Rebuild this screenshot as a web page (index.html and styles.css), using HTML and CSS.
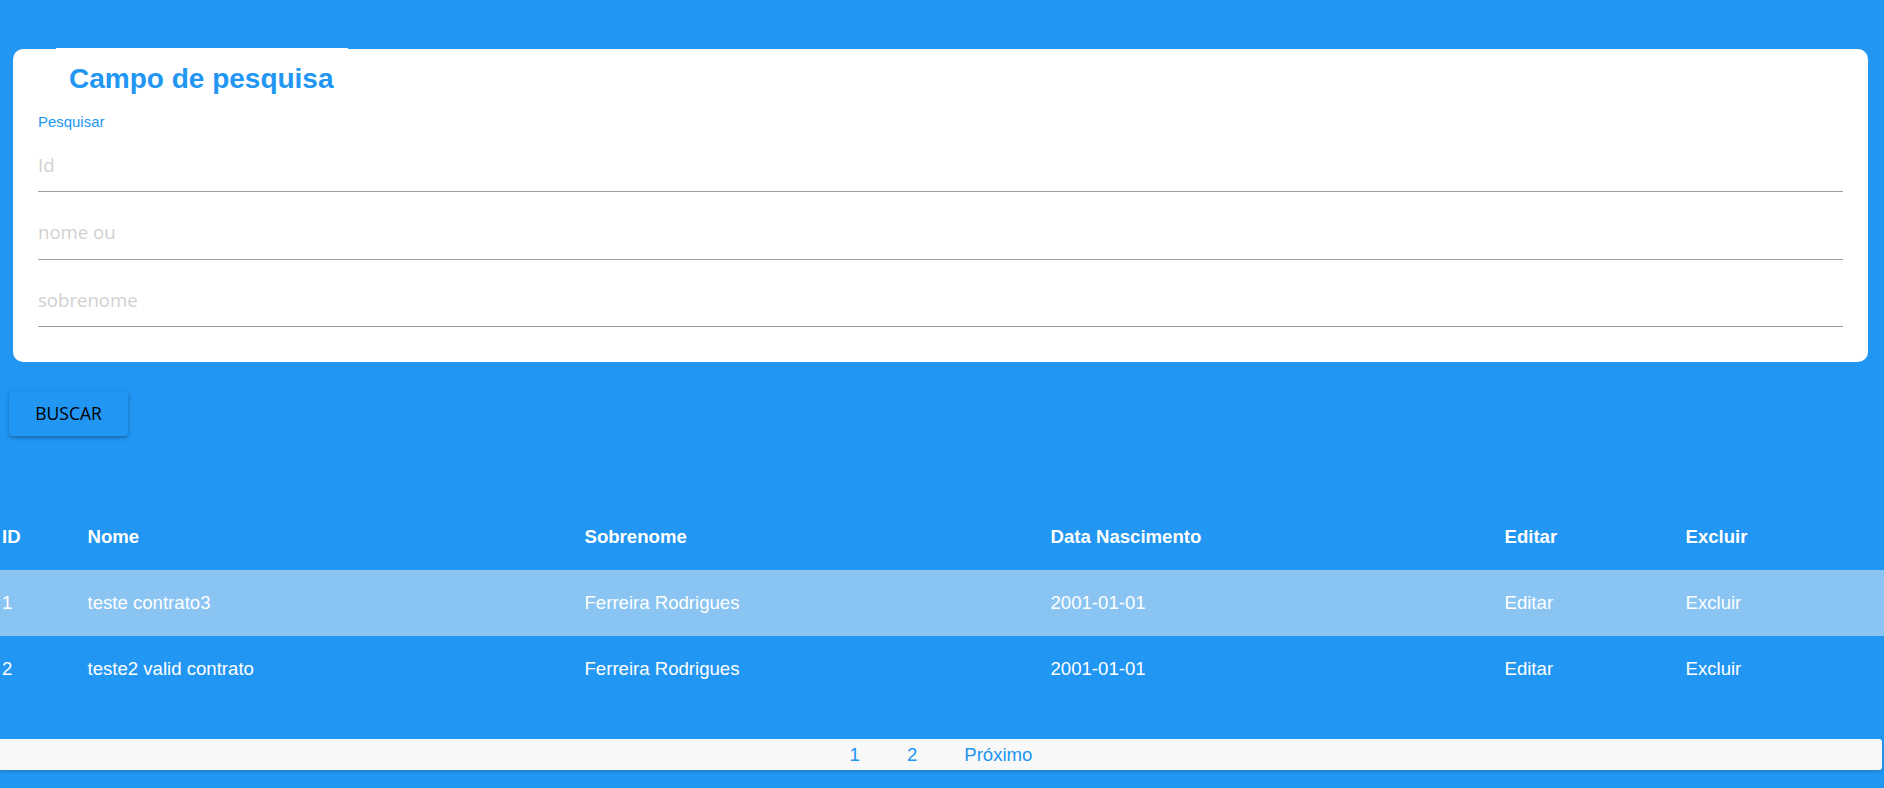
FILE: index.html
```html
<!DOCTYPE html>
<html lang="pt-BR">
<head>
<meta charset="utf-8">
<title>Campo de pesquisa</title>
<link rel="stylesheet" href="styles.css">
</head>
<body>
<main class="page">
  <section class="card">
    <div class="legend">Campo de pesquisa</div>
    <label class="label">Pesquisar</label>
    <div class="fields">
      <input class="field" type="text" placeholder="Id">
      <input class="field" type="text" placeholder="nome ou">
      <input class="field" type="text" placeholder="sobrenome">
    </div>
  </section>
  <button class="btn" type="button">BUSCAR</button>
  <table class="grid">
    <colgroup>
      <col class="c-id"><col class="c-nome"><col class="c-sob"><col class="c-data"><col class="c-edit"><col class="c-del">
    </colgroup>
    <thead>
      <tr><th>ID</th><th>Nome</th><th>Sobrenome</th><th>Data Nascimento</th><th>Editar</th><th>Excluir</th></tr>
    </thead>
    <tbody>
      <tr class="odd"><td>1</td><td>teste contrato3</td><td>Ferreira Rodrigues</td><td>2001-01-01</td><td>Editar</td><td>Excluir</td></tr>
      <tr><td>2</td><td>teste2 valid contrato</td><td>Ferreira Rodrigues</td><td>2001-01-01</td><td>Editar</td><td>Excluir</td></tr>
    </tbody>
  </table>
  <nav class="pager">
    <a class="pg">1</a>
    <a class="pg">2</a>
    <a class="pg">Próximo</a>
  </nav>
</main>
</body>
</html>
```

FILE: styles.css
```css
html, body {
  margin: 0;
  padding: 0;
  background: #2196F3;
  height: 100%;
  overflow: hidden;
}
body {
  font-family: "Liberation Sans", Arial, sans-serif;
  font-size: 18.6px;
}
.page {
  display: flex;
  flex-direction: column;
  padding-top: 49px;
}
.card {
  background: #fff;
  border-radius: 10px;
  margin: 0 16px 0 13px;
  padding: 0 25px 34.5px 25px;
  display: flex;
  flex-direction: column;
  align-items: flex-start;
}
.legend {
  margin-top: -1px;
  margin-left: 18px;
  background: #fff;
  padding: 14.5px 14px 0 13px;
  font-size: 28px;
  line-height: 32px;
  font-weight: bold;
  color: #2196F3;
}
.label {
  margin-top: 18.7px;
  font-size: 14.95px;
  line-height: 17.2px;
  color: #2196F3;
}
.fields {
  margin-top: 8.6px;
  align-self: stretch;
  display: flex;
  flex-direction: column;
  gap: 14px;
}
.field {
  display: block;
  box-sizing: content-box;
  width: 100%;
  height: 50.5px;
  margin: 0;
  padding: 0 0 2px 0;
  border: none;
  border-bottom: 1px solid #9e9e9e;
  outline: none;
  background: transparent;
  font-family: "Open Sans", "Noto Sans", sans-serif;
  font-size: 18.6px;
  color: #000;
}
.field::placeholder {
  color: #d1d1d1;
}
.btn {
  align-self: flex-start;
  margin: 29px 0 0 9px;
  width: 119px;
  height: 45px;
  padding: 0;
  border: none;
  border-radius: 4px;
  background: #2196F3;
  color: #000;
  font-family: "Open Sans", "Noto Sans", sans-serif;
  font-size: 17.5px;
  box-shadow: 0 2px 3px rgba(0,0,0,0.2), 0 1px 6px rgba(0,0,0,0.12);
}
.grid {
  margin-top: 68px;
  width: 100%;
  table-layout: fixed;
  border-collapse: collapse;
  color: #fff;
}
.c-id { width: 85.5px; }
.c-nome { width: 497px; }
.c-sob { width: 466px; }
.c-data { width: 454px; }
.c-edit { width: 181px; }
.grid th, .grid td {
  height: 66px;
  padding: 0 0 0 2px;
  text-align: left;
  vertical-align: middle;
  line-height: normal;
  white-space: nowrap;
}
.grid th {
  font-weight: bold;
}
.grid tr.odd {
  background: rgba(242,242,242,0.5);
}
.pager {
  margin: 37px 2px 0 0;
  height: 31px;
  background: #f8f8f8;
  border-radius: 0 3px 3px 0;
  box-shadow: 0 2px 3px rgba(0,0,0,0.14);
  display: flex;
  justify-content: center;
  align-items: center;
  gap: 47px;
}
.pg {
  color: #2196F3;
  line-height: 31px;
  cursor: pointer;
}
```
